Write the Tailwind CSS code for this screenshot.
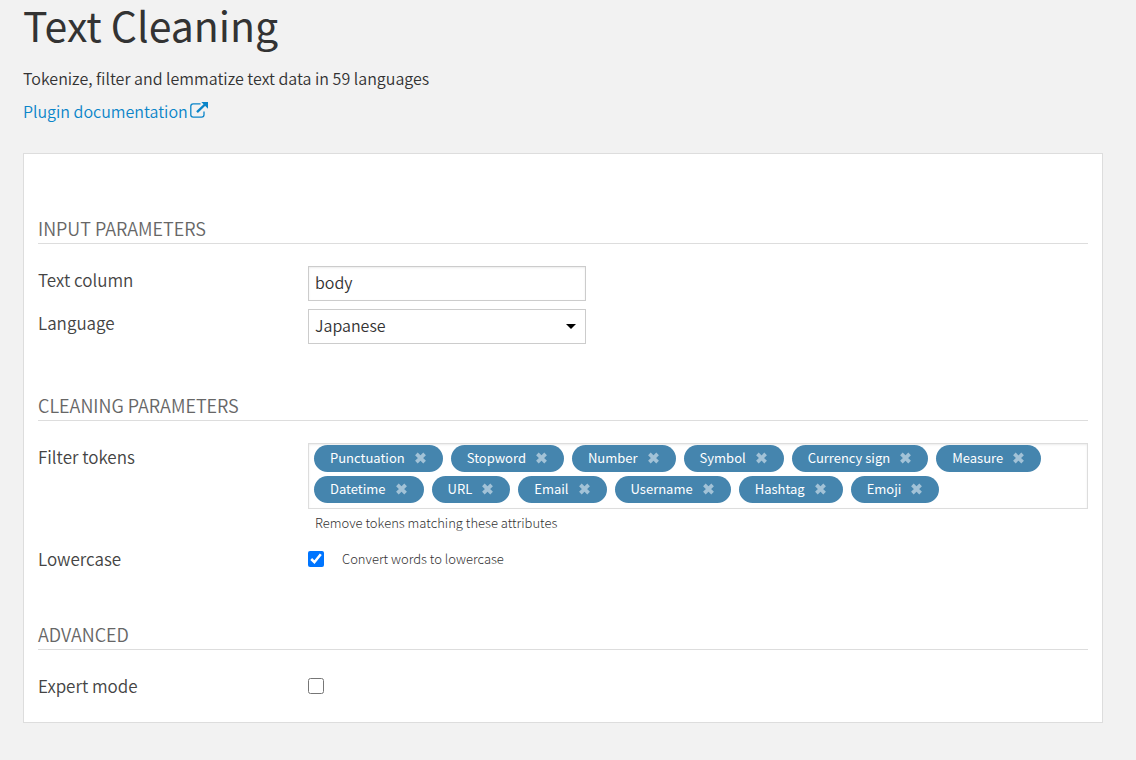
<!DOCTYPE html>
<html lang="en">
<head>
    <meta charset="UTF-8">
    <meta name="viewport" content="width=device-width, initial-scale=1.0">
    <title>Text Cleaning</title>
    <script src="https://cdn.jsdelivr.net/npm/@tailwindcss/browser@4"></script>
</head>
<body class="bg-[#f2f2f2] min-h-screen font-['Noto_Sans_CJK_JP',sans-serif] font-[350] text-[16px] leading-[24px] text-[#333]">

    <!-- Shared icons -->
    <svg class="hidden">
        <symbol id="icon-remove" viewBox="0 0 12 12">
            <path d="M1.900 1.900 10.100 10.100M10.100 1.900 1.900 10.100" fill="none" stroke="currentColor" stroke-width="3.700"/>
        </symbol>
    </svg>

    <header class="pl-[23px] pr-8">
        <h1 class="text-[41px] leading-[48px] font-normal">Text Cleaning</h1>
        <p class="mt-[18px]">Tokenize, filter and lemmatize text data in 59 languages</p>
        <a href="#" class="mt-[9px] flex items-center gap-[2px] text-[#0b85c9] hover:underline">
            Plugin documentation
            <svg class="w-[18px] h-[18px]" viewBox="0 0 18 18" fill="none">
                <path d="M10.500 1.800H3.200A2.4 2.4 0 0 0 .8 4.200v8.600a2.4 2.4 0 0 0 2.4 2.4h8.400a2.4 2.4 0 0 0 2.4-2.4V9.500" stroke="currentColor" stroke-width="1.3"/>
                <path d="M7 10.200 15 2.500" stroke="currentColor" stroke-width="2.400"/>
                <path d="M11.300 0H18v6.700z" fill="currentColor"/>
            </svg>
        </a>
    </header>

    <main class="mt-[30px] ml-[23px] mr-[33px] bg-white border border-[#ddd] px-[14px] pt-16 pb-6">

        <!-- Input parameters -->
        <section>
            <h2 class="text-[18px] leading-[20px] font-[350] text-[#666] border-b border-[#ddd] pb-[5px]">INPUT PARAMETERS</h2>
            <div class="mt-[22px] flex">
                <label for="textColumn" class="w-[270px] shrink-0 pt-[2px] text-[17px] text-[#444]">Text column</label>
                <input id="textColumn" type="text" value="body" class="w-[278px] h-[35px] border border-[#ccc] px-[6px] pb-[3px] shadow-[inset_0_1px_2px_rgba(0,0,0,0.08)]">
            </div>
            <div class="mt-2 flex">
                <label for="language" class="w-[270px] shrink-0 pt-[2px] text-[17px] text-[#444]">Language</label>
                <div class="relative w-[278px]">
                    <select id="language" class="appearance-none w-full h-[35px] bg-white border border-[#ccc] px-[6px] pb-[3px]">
                        <option>Japanese</option>
                        <option>English</option>
                    </select>
                    <svg class="absolute right-[10px] top-[15px] w-[10px] h-[5px] pointer-events-none" viewBox="0 0 10 5"><path d="M0 0h10L5 5z" fill="#000"/></svg>
                </div>
            </div>
        </section>

        <!-- Cleaning parameters -->
        <section class="mt-[51px]">
            <h2 class="text-[18px] leading-[20px] font-[350] text-[#666] border-b border-[#ddd] pb-[5px]">CLEANING PARAMETERS</h2>
            <div class="mt-[22px] flex">
                <span id="filterLabel" class="w-[270px] shrink-0 pt-[2px] text-[17px] text-[#444]">Filter tokens</span>
                <div class="grow">
                    <ul aria-labelledby="filterLabel" class="flex flex-wrap gap-x-2 gap-y-1 border border-[#ddd] min-h-[66px] px-[5px] pt-px pb-[5px] text-[13px] leading-[25px] font-normal text-white shadow-[inset_0_1px_2px_rgba(0,0,0,0.08)]">
                        <li class="flex items-center gap-[9px] h-[27px] rounded-full bg-[#4585ae] px-4 pb-[2px]">Punctuation<button type="button" aria-label="Remove Punctuation" class="text-white/50"><svg class="w-[13px] h-3"><use href="#icon-remove"/></svg></button></li>
                        <li class="flex items-center gap-[9px] h-[27px] rounded-full bg-[#4585ae] px-4 pb-[2px]">Stopword<button type="button" aria-label="Remove Stopword" class="text-white/50"><svg class="w-[13px] h-3"><use href="#icon-remove"/></svg></button></li>
                        <li class="flex items-center gap-[9px] h-[27px] rounded-full bg-[#4585ae] px-4 pb-[2px]">Number<button type="button" aria-label="Remove Number" class="text-white/50"><svg class="w-[13px] h-3"><use href="#icon-remove"/></svg></button></li>
                        <li class="flex items-center gap-[9px] h-[27px] rounded-full bg-[#4585ae] px-4 pb-[2px]">Symbol<button type="button" aria-label="Remove Symbol" class="text-white/50"><svg class="w-[13px] h-3"><use href="#icon-remove"/></svg></button></li>
                        <li class="flex items-center gap-[9px] h-[27px] rounded-full bg-[#4585ae] px-4 pb-[2px]">Currency sign<button type="button" aria-label="Remove Currency sign" class="text-white/50"><svg class="w-[13px] h-3"><use href="#icon-remove"/></svg></button></li>
                        <li class="flex items-center gap-[9px] h-[27px] rounded-full bg-[#4585ae] px-4 pb-[2px]">Measure<button type="button" aria-label="Remove Measure" class="text-white/50"><svg class="w-[13px] h-3"><use href="#icon-remove"/></svg></button></li>
                        <li class="flex items-center gap-[9px] h-[27px] rounded-full bg-[#4585ae] px-4 pb-[2px]">Datetime<button type="button" aria-label="Remove Datetime" class="text-white/50"><svg class="w-[13px] h-3"><use href="#icon-remove"/></svg></button></li>
                        <li class="flex items-center gap-[9px] h-[27px] rounded-full bg-[#4585ae] px-4 pb-[2px]">URL<button type="button" aria-label="Remove URL" class="text-white/50"><svg class="w-[13px] h-3"><use href="#icon-remove"/></svg></button></li>
                        <li class="flex items-center gap-[9px] h-[27px] rounded-full bg-[#4585ae] px-4 pb-[2px]">Email<button type="button" aria-label="Remove Email" class="text-white/50"><svg class="w-[13px] h-3"><use href="#icon-remove"/></svg></button></li>
                        <li class="flex items-center gap-[9px] h-[27px] rounded-full bg-[#4585ae] px-4 pb-[2px]">Username<button type="button" aria-label="Remove Username" class="text-white/50"><svg class="w-[13px] h-3"><use href="#icon-remove"/></svg></button></li>
                        <li class="flex items-center gap-[9px] h-[27px] rounded-full bg-[#4585ae] px-4 pb-[2px]">Hashtag<button type="button" aria-label="Remove Hashtag" class="text-white/50"><svg class="w-[13px] h-3"><use href="#icon-remove"/></svg></button></li>
                        <li class="flex items-center gap-[9px] h-[27px] rounded-full bg-[#4585ae] px-4 pb-[2px]">Emoji<button type="button" aria-label="Remove Emoji" class="text-white/50"><svg class="w-[13px] h-3"><use href="#icon-remove"/></svg></button></li>
                    </ul>
                    <p class="mt-1 pl-[7px] text-[13px] leading-[20px] font-light text-[#333]">Remove tokens matching these attributes</p>
                </div>
            </div>
            <div class="mt-[14px] flex items-center">
                <label for="lowercase" class="w-[270px] shrink-0 text-[17px] text-[#444]">Lowercase</label>
                <input id="lowercase" type="checkbox" checked class="w-4 h-4">
                <label for="lowercase" class="ml-[18px] text-[13px] leading-[20px] font-light text-[#333]">Convert words to lowercase</label>
            </div>
        </section>

        <!-- Advanced -->
        <section class="mt-[53px]">
            <h2 class="text-[18px] leading-[20px] font-[350] text-[#666] border-b border-[#ddd] pb-[5px]">ADVANCED</h2>
            <div class="mt-6 flex items-center">
                <label for="expertMode" class="w-[270px] shrink-0 text-[17px] text-[#444]">Expert mode</label>
                <input id="expertMode" type="checkbox" class="w-4 h-4">
            </div>
        </section>
    </main>

</body>
</html>
